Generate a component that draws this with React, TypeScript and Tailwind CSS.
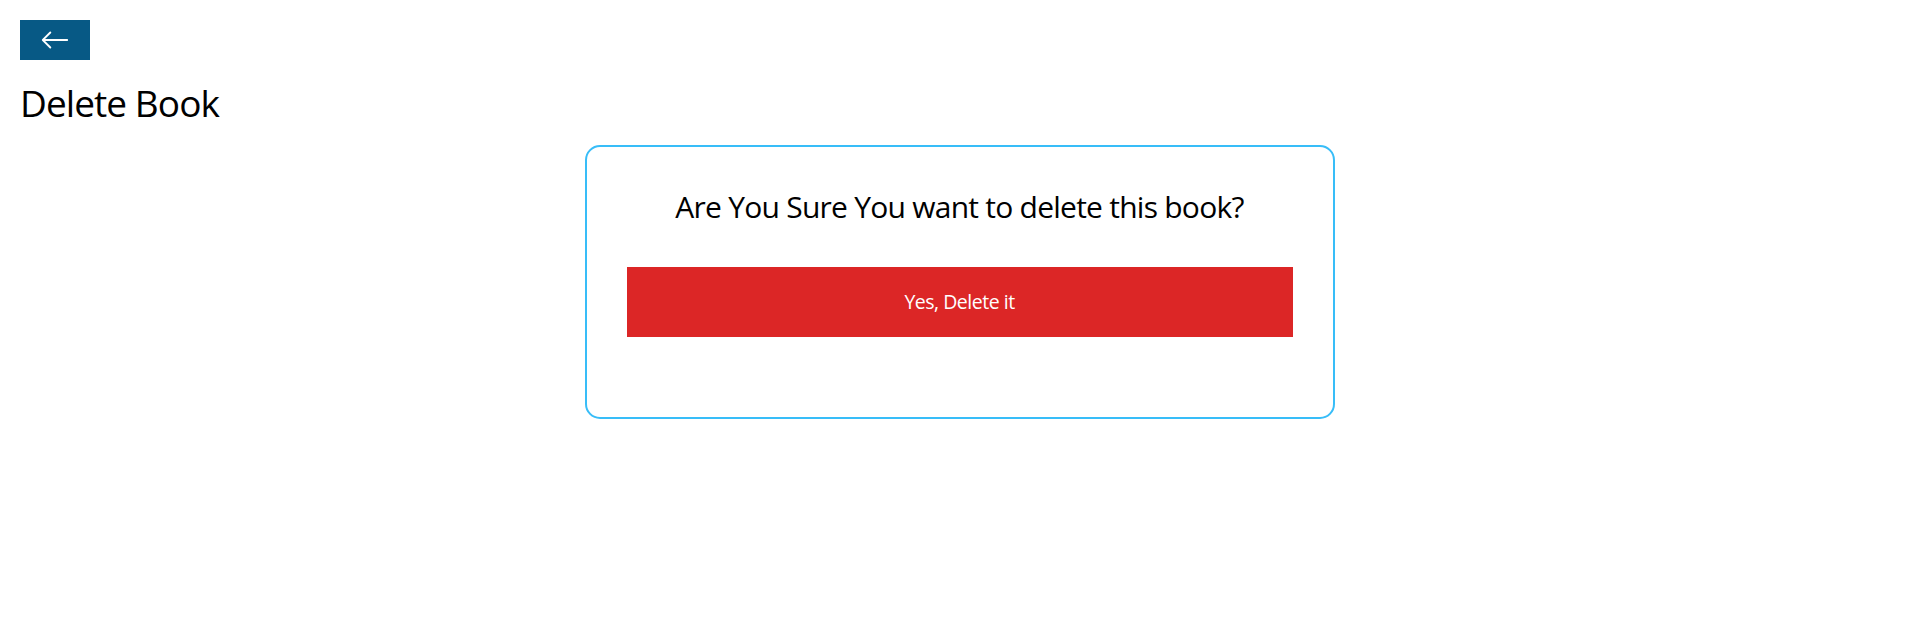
import React from "react";

function ArrowLeft() {
  return (
    <svg width="30" height="30" viewBox="0 0 16 16" fill="currentColor">
      <path
        fillRule="evenodd"
        d="M15 8a.5.5 0 0 0-.5-.5H2.707l3.147-3.146a.5.5 0 1 0-.708-.708l-4 4a.5.5 0 0 0 0 .708l4 4a.5.5 0 0 0 .708-.708L2.707 8.5H14.5A.5.5 0 0 0 15 8z"
      />
    </svg>
  );
}

export default function App() {
  return (
    <div
      className="min-h-[635px] bg-white p-5 text-black"
      style={{ fontFamily: '"Open Sans", "Noto Sans", sans-serif' }}
    >
      <div className="flex">
        <button className="flex h-10 w-[70px] items-center justify-center bg-[#075985] text-white">
          <ArrowLeft />
        </button>
      </div>
      <h1 className="my-5 text-[37px] leading-[45px] font-normal tracking-[-0.025em]">Delete Book</h1>
      <div className="mx-auto flex w-[750px] flex-col items-center rounded-[15px] border-[2.5px] border-[#38bdf8] p-10">
        <h3 className="text-[30px] leading-[40px] tracking-[-0.025em]">
          Are You Sure You want to delete this book?
        </h3>
        <button className="m-10 w-full bg-[#dc2626] p-5 text-[19.5px] leading-[30px] tracking-[-0.025em] text-white">
          Yes, Delete it
        </button>
      </div>
    </div>
  );
}
